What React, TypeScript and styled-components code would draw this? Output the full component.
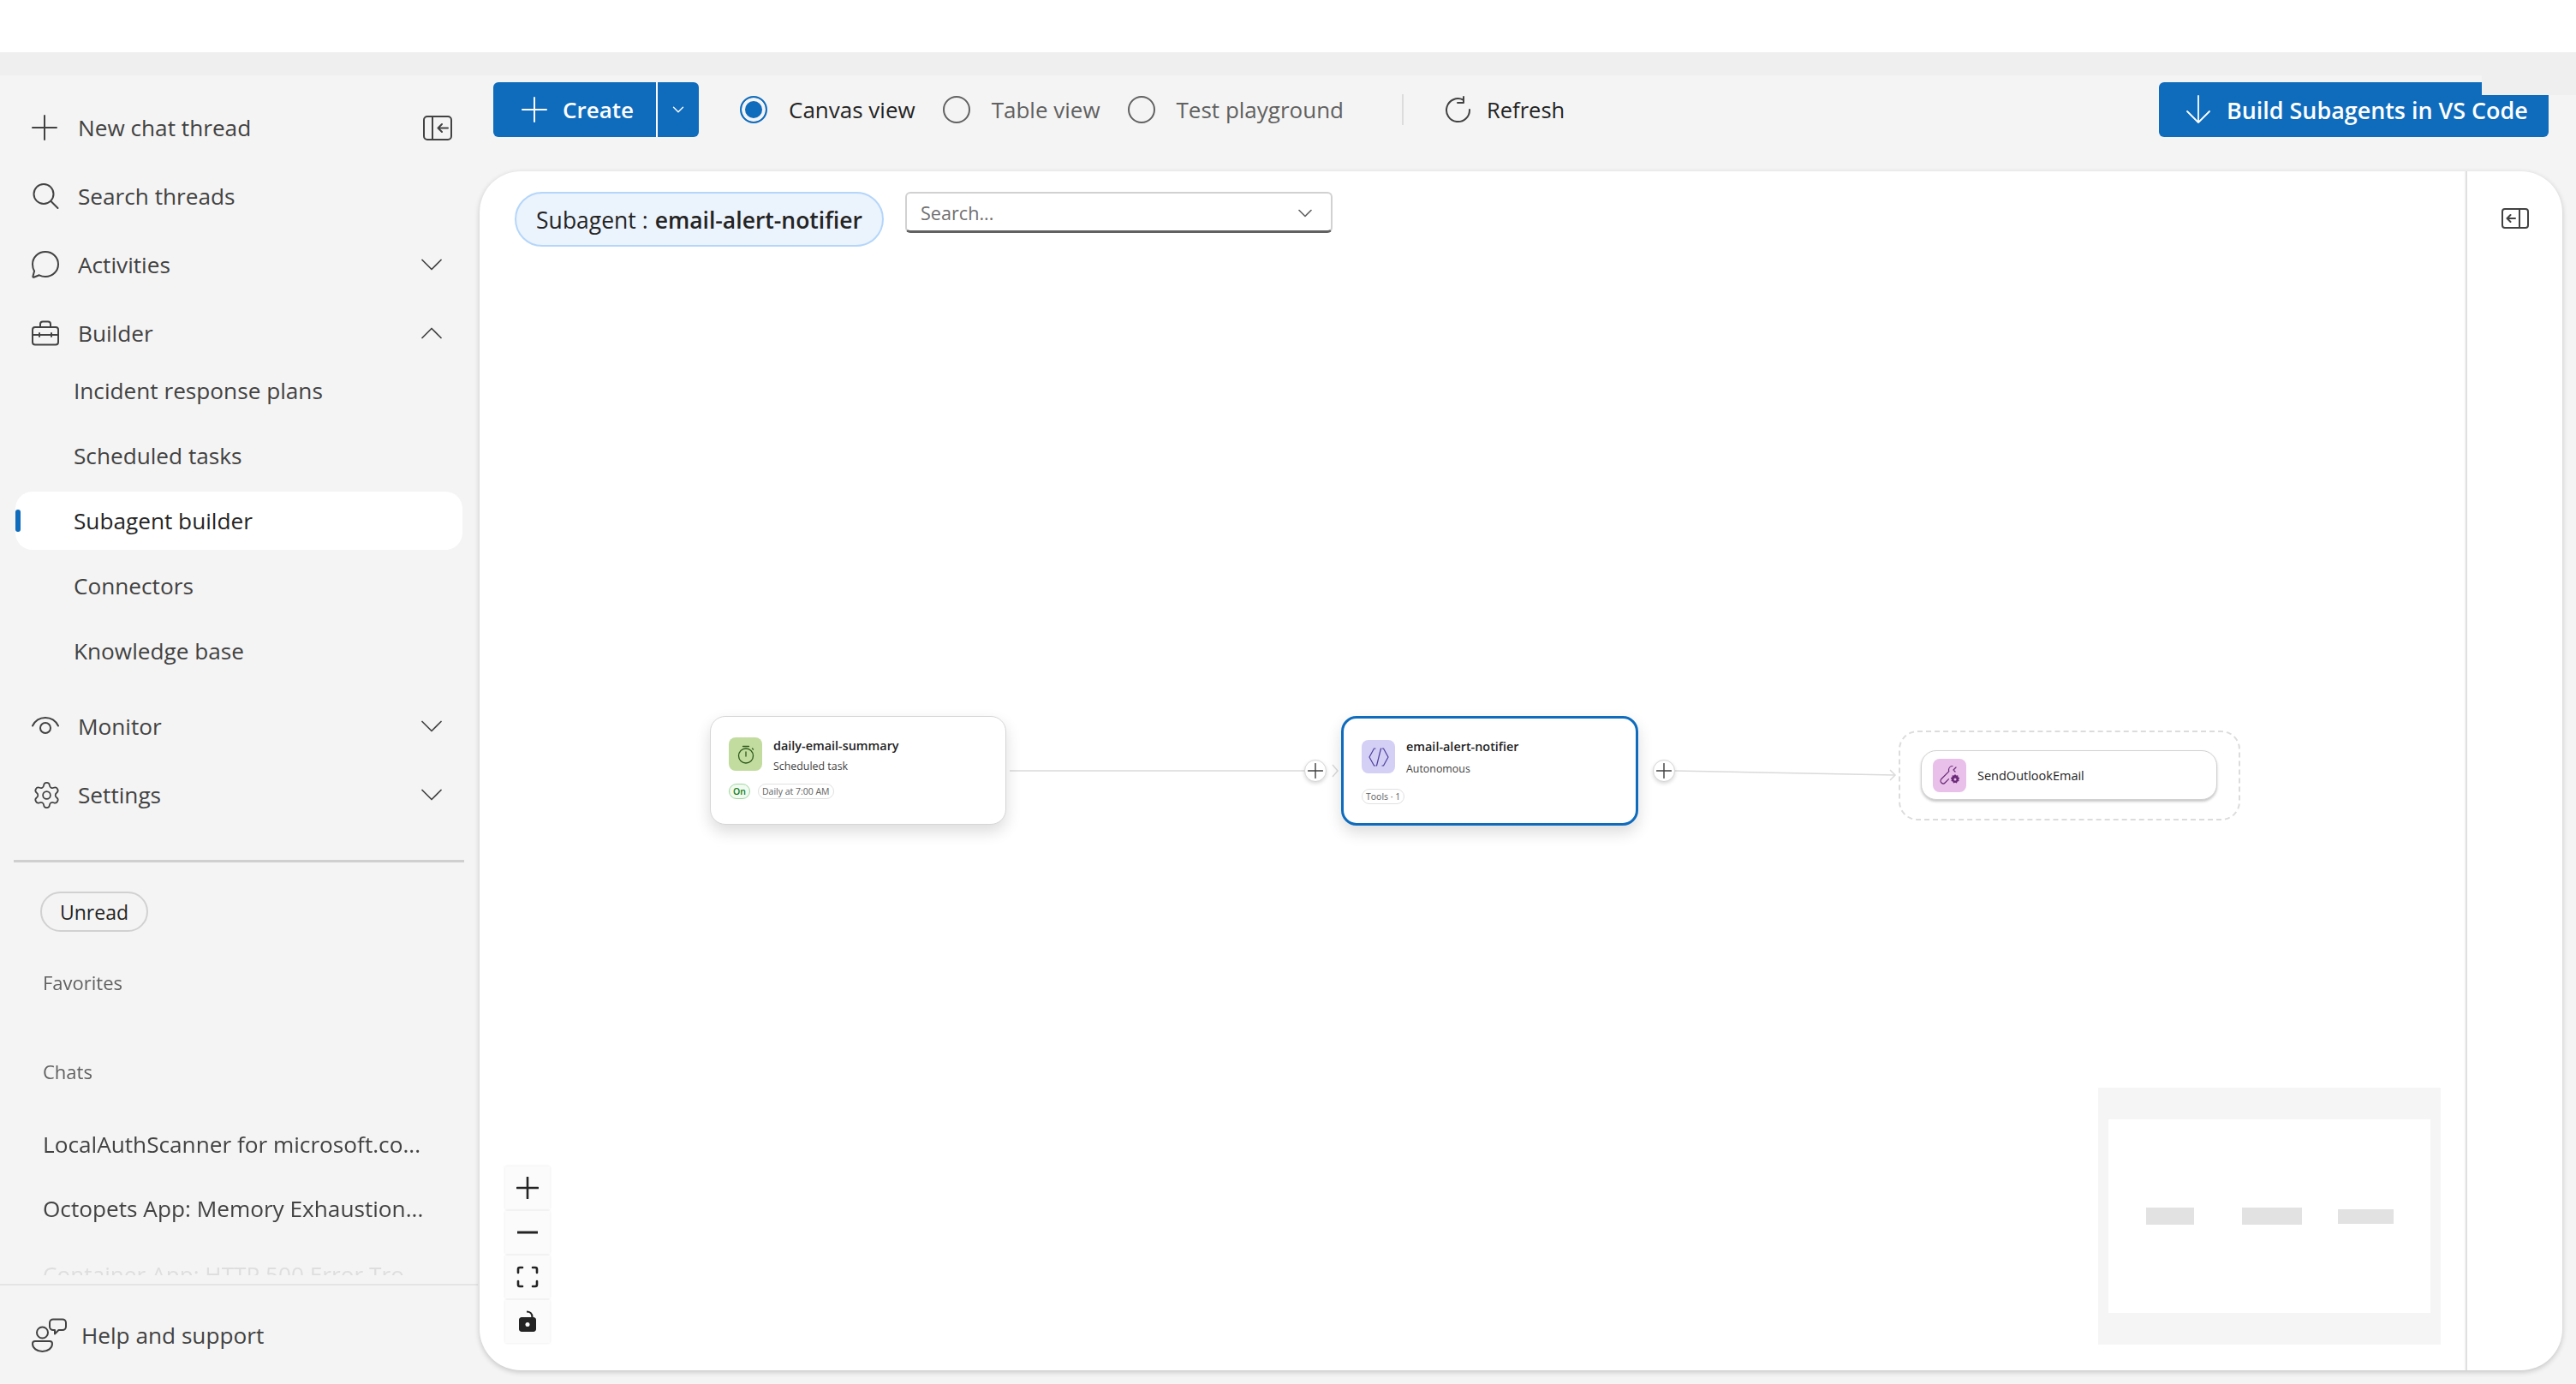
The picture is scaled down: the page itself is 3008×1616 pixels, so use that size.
import React from 'react';
import { styled, createGlobalStyle } from 'styled-components';
import { ChevronDown, Settings } from 'lucide-react';

const GlobalStyle = createGlobalStyle`
  html, body {
    margin: 0;
    padding: 0;
    background: #fff;
    font-family: "Open Sans", "Noto Sans", sans-serif;
    color: #424242;
  }
  * { box-sizing: border-box; }
`;

const Page = styled.div`
  position: relative;
  width: 3008px;
  height: 1616px;
  overflow: hidden;
  background: #fff;
`;

const TopStrip = styled.div`
  height: 61px;
  background: #fff;
`;

const Band = styled.div`
  height: 27px;
  background: #efefef;
`;

const BandPatch = styled.div`
  position: absolute;
  top: 88px;
  right: 0;
  width: 110px;
  height: 23px;
  background: #efefef;
  z-index: 2;
`;

const Shell = styled.div`
  display: grid;
  grid-template-columns: 560px 1fr;
  height: 1528px;
  background: #f4f4f4;
`;

/* sidebar */
const Sidebar = styled.aside`
  display: flex;
  flex-direction: column;
  height: 1528px;
`;

const NavGroup = styled.nav<{ $top: number }>`
  display: flex;
  flex-direction: column;
  gap: 16px;
  margin-top: ${(p) => p.$top}px;
`;

const NavRow = styled.div`
  display: flex;
  align-items: center;
  height: 64px;
  padding: 0 32px 0 37px;
  font-size: 26.2px;
  color: #424242;
`;

const NavIcon = styled.span`
  display: flex;
  align-items: center;
  justify-content: flex-start;
  width: 54px;
  flex: none;
`;

const NavLabel = styled.span`
  flex: 1;
`;

const SubList = styled.div`
  display: flex;
  flex-direction: column;
  gap: 8px;
  margin-top: 1px;
`;

const SubItem = styled.div<{ $active?: boolean }>`
  position: relative;
  display: flex;
  align-items: center;
  width: 522px;
  height: 68px;
  margin-left: 18px;
  padding-left: 68px;
  font-size: 26.2px;
  border-radius: 20px;
  color: ${(p) => (p.$active ? '#242424' : '#424242')};
  background: ${(p) => (p.$active ? '#fff' : 'transparent')};
`;

const ActiveMark = styled.span`
  position: absolute;
  left: 0;
  top: 21px;
  width: 6px;
  height: 26px;
  border-radius: 3px;
  background: #0f6cbd;
`;

const Divider = styled.hr`
  width: 526px;
  height: 3px;
  margin: 44px 0 0 16px;
  border: 0;
  background: #cfcfcf;
`;

const UnreadPill = styled.div`
  display: flex;
  align-items: center;
  justify-content: center;
  width: 126px;
  height: 47px;
  margin: 34px 0 0 47px;
  border: 2px solid #d1d1d1;
  border-radius: 24px;
  font-size: 23px;
  color: #242424;
`;

const History = styled.div`
  flex: 1;
  min-height: 0;
  overflow: hidden;
  margin-bottom: 10px;
  padding-left: 50px;
  -webkit-mask-image: linear-gradient(#000 calc(100% - 34px), rgba(0, 0, 0, 0.12) calc(100% - 14px));
`;

const SectionLabel = styled.div<{ $top: number }>`
  margin-top: ${(p) => p.$top}px;
  height: 30px;
  line-height: 30px;
  font-size: 22px;
  color: #616161;
`;

const ChatItem = styled.div<{ $top: number }>`
  margin-top: ${(p) => p.$top}px;
  height: 38px;
  line-height: 38px;
  font-size: 26.2px;
  color: #424242;
  white-space: nowrap;
`;

const HelpRow = styled.div`
  display: flex;
  align-items: center;
  height: 117px;
  margin-right: 2px;
  padding: 0 0 0 37px;
  border-top: 2px solid #e4e4e4;
  font-size: 26.2px;
  color: #424242;
`;

const HelpIcon = styled.span`
  display: flex;
  width: 58px;
  flex: none;
`;

const NavChevron = styled.svg`
  margin-right: 12px;
  color: #424242;
`;

/* toolbar */
const Main = styled.main`
  display: flex;
  flex-direction: column;
  min-width: 0;
`;

const Toolbar = styled.div`
  display: flex;
  align-items: center;
  height: 112px;
  padding: 8px 32px 40px 16px;
`;

const SplitButton = styled.div`
  display: flex;
  width: 240px;
  height: 64px;
  border-radius: 6px;
  background: #0f6cbd;
  color: #fff;
  font-size: 26px;
  font-weight: 600;
`;

const SplitMain = styled.div`
  display: flex;
  align-items: center;
  gap: 18px;
  width: 192px;
  padding-left: 33px;
  border-right: 2px solid #fff;
`;

const SplitCaret = styled.div`
  display: flex;
  flex: 1;
  align-items: center;
  justify-content: center;
`;

const RadioGroup = styled.div`
  display: flex;
  align-items: center;
  gap: 32px;
  margin-left: 48px;
`;

const RadioItem = styled.label<{ $checked?: boolean }>`
  display: flex;
  align-items: center;
  gap: 25px;
  font-size: 26px;
  color: ${(p) => (p.$checked ? '#242424' : '#616161')};
`;

const RadioMark = styled.span<{ $checked?: boolean }>`
  display: block;
  width: 32px;
  height: 32px;
  border-radius: 50%;
  border: 2px solid ${(p) => (p.$checked ? '#0f6cbd' : '#616161')};
  background: ${(p) => (p.$checked ? '#0f6cbd' : 'transparent')};
  box-shadow: ${(p) => (p.$checked ? 'inset 0 0 0 4px #f4f4f4' : 'none')};
`;

const ToolSep = styled.span`
  width: 2px;
  height: 36px;
  margin-left: 68px;
  background: #dcdcdc;
`;

const RefreshButton = styled.div`
  display: flex;
  align-items: center;
  gap: 17px;
  margin-left: 48px;
  font-size: 25.5px;
  font-weight: 500;
  color: #242424;
`;

const BuildButton = styled.div`
  display: flex;
  align-items: center;
  gap: 18px;
  width: 455px;
  height: 64px;
  margin-left: auto;
  padding-left: 31px;
  border-radius: 6px;
  background: #0f6cbd;
  color: #fff;
  font-size: 26.9px;
  font-weight: 600;
  white-space: nowrap;
`;

/* canvas panel */
const Panel = styled.section`
  display: flex;
  flex: 1;
  margin: 0 16px 16px 0;
  border-radius: 48px;
  background: #fff;
  box-shadow: 0 2px 6px rgba(0, 0, 0, 0.2);
  overflow: hidden;
`;

const Canvas = styled.div`
  position: relative;
  flex: 1;
`;

const Filters = styled.div`
  display: flex;
  align-items: flex-start;
  gap: 25px;
  padding: 24px 0 0 41px;
`;

const SubagentChip = styled.div`
  display: flex;
  align-items: center;
  justify-content: center;
  gap: 8px;
  width: 431px;
  height: 64px;
  padding-top: 2px;
  border: 2px solid #b4d6fa;
  border-radius: 32px;
  background: #ebf3fc;
  font-size: 26.5px;
  color: #242424;
  white-space: nowrap;
  b { font-weight: 600; }
`;

const SearchBox = styled.div`
  display: flex;
  align-items: center;
  justify-content: space-between;
  width: 499px;
  height: 48px;
  padding: 2px 16px 0 16px;
  border: 2px solid #d1d1d1;
  border-bottom: 3px solid #616161;
  border-radius: 6px;
  font-size: 21.6px;
  color: #707070;
`;

const Rail = styled.div`
  display: flex;
  justify-content: center;
  width: 113px;
  padding-top: 43px;
  border-left: 2px solid #e0e0e0;
  box-shadow: -1px 0 2px rgba(0, 0, 0, 0.05);
`;

const Edges = styled.svg`
  position: absolute;
  inset: 0;
`;

const Node = styled.div<{ $x: number; $y: number; $w: number; $h: number; $selected?: boolean }>`
  position: absolute;
  left: ${(p) => p.$x}px;
  top: ${(p) => p.$y}px;
  width: ${(p) => p.$w}px;
  height: ${(p) => p.$h}px;
  padding: ${(p) => (p.$selected ? '25px 0 0 21px' : '24px 0 0 21px')};
  border: ${(p) => (p.$selected ? '3px solid #0f6cbd' : '1px solid #d6d6d6')};
  border-radius: 18px;
  background: #fff;
  box-shadow: 0 8px 18px rgba(0, 0, 0, 0.14);
`;

const NodeHead = styled.div`
  display: flex;
  gap: 13px;
`;

const NodeIcon = styled.div<{ $bg: string }>`
  display: flex;
  align-items: center;
  justify-content: center;
  width: 39px;
  height: 39px;
  flex: none;
  border-radius: 8px;
  background: ${(p) => p.$bg};
`;

const NodeText = styled.div<{ $lift?: number }>`
  margin-top: ${(p) => -(p.$lift ?? 0)}px;
`;

const NodeTitle = styled.div`
  font-size: 14.4px;
  line-height: 20px;
  font-weight: 600;
  color: #242424;
  white-space: nowrap;
`;

const NodeSub = styled.div<{ $gap: number }>`
  margin-top: ${(p) => p.$gap}px;
  font-size: 12.4px;
  line-height: 18px;
  color: #424242;
`;

const Pills = styled.div<{ $top: number }>`
  display: flex;
  gap: 9px;
  margin-top: ${(p) => p.$top}px;
`;

const Pill = styled.span<{ $on?: boolean }>`
  display: inline-flex;
  align-items: center;
  height: 18px;
  padding: 0 4px;
  border: 1px solid ${(p) => (p.$on ? '#9fd89f' : '#e0e0e0')};
  border-radius: 9px;
  background: ${(p) => (p.$on ? '#f1faf1' : '#fff')};
  font-size: 10.5px;
  font-weight: ${(p) => (p.$on ? 600 : 400)};
  color: ${(p) => (p.$on ? '#107c10' : '#616161')};
  white-space: nowrap;
`;

const AddHandle = styled.div<{ $x: number }>`
  position: absolute;
  left: ${(p) => p.$x}px;
  top: 687px;
  display: flex;
  align-items: center;
  justify-content: center;
  width: 26px;
  height: 26px;
  border-radius: 50%;
  border: 1px solid #d6d6d6;
  background: #fff;
  box-shadow: 0 2px 4px rgba(0, 0, 0, 0.15);
`;

const ToolGroup = styled.div`
  position: absolute;
  left: 1657px;
  top: 653px;
  width: 399px;
  height: 105px;
  border: 2px dashed #dcdcdc;
  border-radius: 22px;
  padding: 21px 0 0 24px;
`;

const ToolCard = styled.div`
  display: flex;
  align-items: center;
  gap: 13px;
  width: 346px;
  height: 58px;
  padding-left: 13px;
  border: 1px solid #d1d1d1;
  border-radius: 18px;
  background: #fff;
  box-shadow: 0 2px 3px rgba(0, 0, 0, 0.22);
  font-size: 14.5px;
  font-weight: 500;
  color: #242424;
`;

const ZoomBar = styled.div`
  position: absolute;
  left: 30px;
  top: 1162px;
  display: flex;
  flex-direction: column;
  gap: 2px;
  width: 52px;
`;

const ZoomButton = styled.div`
  display: flex;
  align-items: center;
  justify-content: center;
  height: 50px;
  background: #fbfbfb;
  box-shadow: 0 0 3px rgba(0, 0, 0, 0.1);
`;

const MiniMap = styled.div`
  position: absolute;
  left: 1890px;
  top: 1070px;
  width: 400px;
  height: 300px;
  padding: 37px 12px;
  background: #f5f5f5;
`;

const MiniBoard = styled.div`
  display: flex;
  align-items: center;
  width: 376px;
  height: 226px;
  padding-left: 44px;
  background: #fff;
`;

const MiniNode = styled.span<{ $w: number; $h: number; $gap: number }>`
  width: ${(p) => p.$w}px;
  height: ${(p) => p.$h}px;
  margin-right: ${(p) => p.$gap}px;
  background: #e2e2e2;
`;

const Line = ({ d, w = 1.6 }: { d: string; w?: number }) => (
  <path d={d} fill="none" stroke="currentColor" strokeWidth={w} strokeLinecap="round" strokeLinejoin="round" />
);

const Chevron = ({ up }: { up?: boolean }) => (
  <NavChevron width="24" height="14" viewBox="0 0 24 14">
    <Line d={up ? 'M1 12.5L12 1.500l11 11' : 'M1 1.500l11 11 11-11'} w={1.700} />
  </NavChevron>
);

const PlusIcon = ({ size = 30, w = 2, color = '#424242' }: { size?: number; w?: number; color?: string }) => (
  <svg width={size} height={size} viewBox="0 0 30 30" style={{ color }}>
    <Line d="M15 1v28M1 15h28" w={w} />
  </svg>
);

const SearchIcon = () => (
  <svg width="32" height="32" viewBox="0 0 32 32" style={{ color: '#424242' }}>
    <circle cx="14" cy="13.5" r="11.5" fill="none" stroke="currentColor" strokeWidth="2" />
    <Line d="M22.5 22l8 8" w={2} />
  </svg>
);

const ChatIcon = () => (
  <svg width="32" height="34" viewBox="0 0 32 34" style={{ color: '#424242' }}>
    <Line d="M16 2c8.4 0 15 6.4 15 14.5S24.4 31 16 31c-2.600 0-5-.6-7.200-1.700L2.500 31.800c-.7.2-1.300-.4-1.100-1.100l1.700-6.100C1.700 22.400 1 19.600 1 16.500 1 8.400 7.600 2 16 2z" w={2} />
  </svg>
);

const BriefcaseIcon = () => (
  <svg width="32" height="30" viewBox="0 0 32 30" style={{ color: '#424242' }}>
    <rect x="1" y="8" width="30" height="20.500" rx="3" fill="none" stroke="currentColor" strokeWidth="2" />
    <Line d="M10 8V4.500C10 2.800 11.200 1.500 13 1.500h6c1.800 0 3 1.300 3 3V8M1 17h30M9 15v4M23 15v4" w={2} />
  </svg>
);

const EyeIcon = () => (
  <svg width="32" height="22" viewBox="0 0 32 22" style={{ color: '#424242' }}>
    <Line d="M1 10.500C4 4.500 9.500 1 16 1s12 3.500 15 9.500" w={2} />
    <circle cx="16" cy="13" r="6" fill="none" stroke="currentColor" strokeWidth="2" />
  </svg>
);

const PanelLeftIcon = () => (
  <svg width="34" height="29" viewBox="0 0 34 29" style={{ color: '#424242' }}>
    <rect x="1" y="1" width="32" height="27" rx="4" fill="none" stroke="currentColor" strokeWidth="2" />
    <Line d="M11 1v27M29 14.500H18M22 10l-4.500 4.500L22 19" w={2} />
  </svg>
);

const PanelRightIcon = () => (
  <svg width="32" height="24" viewBox="0 0 32 24" style={{ color: '#424242' }}>
    <rect x="1" y="1" width="30" height="22" rx="3" fill="none" stroke="currentColor" strokeWidth="2" />
    <Line d="M21 1v22M16 12H7M10.500 8L6.500 12l4 4" w={2} />
  </svg>
);

const HelpGlyph = () => (
  <svg width="42" height="40" viewBox="0 0 42 40" style={{ color: '#424242' }}>
    <circle cx="12.500" cy="17" r="6.500" fill="none" stroke="currentColor" strokeWidth="2" />
    <Line d="M4 27h17c1.700 0 3 1.300 3 3 0 5-5 9-11.500 9S1 35 1 30c0-1.700 1.300-3 3-3z" w={2} />
    <Line d="M25 1.500h11c2 0 4 1.500 4 4v4.500c0 2.500-2 4-4 4h-4.500L27 18.500V14h-2c-2 0-4-1.500-4-4V5.500c0-2.500 2-4 4-4z" w={2} />
  </svg>
);

const ArrowDownIcon = () => (
  <svg width="30" height="34" viewBox="0 0 30 34" style={{ color: '#fff' }}>
    <Line d="M15 1v31M2 19l13 13 13-13" w={1.8} />
  </svg>
);

const RefreshIcon = () => (
  <svg width="32" height="32" viewBox="0 0 32 32" style={{ color: '#424242' }}>
    <Line d="M21.500 4.500A13.500 13.500 0 1 0 29 16M22 1v7h-7" w={2} />
  </svg>
);

const TimerIcon = () => (
  <svg width="20" height="22" viewBox="0 0 20 22" style={{ color: '#2f5a1c' }}>
    <circle cx="10" cy="12.500" r="8.500" fill="none" stroke="currentColor" strokeWidth="1.300" />
    <Line d="M6.500 1.500h7M10 8v5M17.500 4l1 1" w={1.300} />
  </svg>
);

const CodeIcon = () => (
  <svg width="24" height="22" viewBox="0 0 24 22" style={{ color: '#4a3f9c' }}>
    <Line d="M8 1H6.500L1 11l5.500 10H8M16 1h1.500L23 11l-5.500 10H16M14.500 1L9.500 21" w={1.200} />
  </svg>
);

const ToolIcon = () => (
  <svg width="24" height="24" viewBox="0 0 24 24" style={{ color: '#6b2a78' }}>
    <Line d="M19 3l-3 3 2 2M15 1.500c-2.500 0-4.500 2-4.500 4.500 0 .6.100 1.200.3 1.700L2 16.500c-1.300 1.300-1.300 3.300 0 4.500s3 1.200 4.200 0l4.300-4.300" w={1.200} />
    <path d="M18 11l1.200 1.600 2-.3.3 2 1.700 1.200-1.200 1.700.7 1.900-2 .5-.8 1.900-1.900-.8-1.900.8-.8-1.900-2-.5.700-1.900-1.200-1.700 1.700-1.200.3-2 2 .3z" fill="currentColor" />
    <circle cx="18" cy="17" r="1.500" fill="#e8c0ea" />
  </svg>
);

const MinusIcon = () => (
  <svg width="26" height="26" viewBox="0 0 26 26" style={{ color: '#242424' }}>
    <path d="M1 13h24" stroke="currentColor" strokeWidth="3" />
  </svg>
);

const FitIcon = () => (
  <svg width="26" height="26" viewBox="0 0 26 26" style={{ color: '#242424' }}>
    <Line d="M2 8V4c0-1.200.8-2 2-2h3M19 2h3c1.200 0 2 .8 2 2v4M24 18v4c0 1.200-.8 2-2 2h-3M7 24H4c-1.200 0-2-.8-2-2v-4" w={2.600} />
  </svg>
);

const LockIcon = () => (
  <svg width="20" height="26" viewBox="0 0 20 26" style={{ color: '#242424' }}>
    <path d="M3 8h14c1.600 0 3 1.400 3 3v11c0 1.600-1.400 3-3 3H3c-1.600 0-3-1.400-3-3V11c0-1.600 1.400-3 3-3z" fill="currentColor" />
    <circle cx="10" cy="16.500" r="2.500" fill="#fcfcfc" />
    <path d="M9 1.500c3.500 0 6.500 2 6.500 6.500" fill="none" stroke="currentColor" strokeWidth="2.200" />
  </svg>
);

const App = () => {
  return (
    <Page>
      <GlobalStyle />
      <TopStrip />
      <Band />
      <BandPatch />
      <Shell>
        <Sidebar>
          <NavGroup $top={29}>
            <NavRow>
              <NavIcon><PlusIcon /></NavIcon>
              <NavLabel>New chat thread</NavLabel>
              <PanelLeftIcon />
            </NavRow>
            <NavRow>
              <NavIcon><SearchIcon /></NavIcon>
              <NavLabel>Search threads</NavLabel>
            </NavRow>
            <NavRow>
              <NavIcon><ChatIcon /></NavIcon>
              <NavLabel>Activities</NavLabel>
              <Chevron />
            </NavRow>
            <NavRow>
              <NavIcon><BriefcaseIcon /></NavIcon>
              <NavLabel>Builder</NavLabel>
              <Chevron up />
            </NavRow>
          </NavGroup>
          <SubList>
            <SubItem>Incident response plans</SubItem>
            <SubItem>Scheduled tasks</SubItem>
            <SubItem $active><ActiveMark />Subagent builder</SubItem>
            <SubItem>Connectors</SubItem>
            <SubItem>Knowledge base</SubItem>
          </SubList>
          <NavGroup $top={22}>
            <NavRow>
              <NavIcon><EyeIcon /></NavIcon>
              <NavLabel>Monitor</NavLabel>
              <Chevron />
            </NavRow>
            <NavRow>
              <NavIcon><Settings size={35} strokeWidth={1.2} color="#424242" /></NavIcon>
              <NavLabel>Settings</NavLabel>
              <Chevron />
            </NavRow>
          </NavGroup>
          <Divider />
          <UnreadPill>Unread</UnreadPill>
          <History>
            <SectionLabel $top={44}>Favorites</SectionLabel>
            <SectionLabel $top={74}>Chats</SectionLabel>
            <ChatItem $top={51}>LocalAuthScanner for microsoft.co...</ChatItem>
            <ChatItem $top={37}>Octopets App: Memory Exhaustion...</ChatItem>
            <ChatItem $top={39}>Container App: HTTP 500 Error Tro...</ChatItem>
          </History>
          <HelpRow>
            <HelpIcon><HelpGlyph /></HelpIcon>
            Help and support
          </HelpRow>
        </Sidebar>
        <Main>
          <Toolbar>
            <SplitButton>
              <SplitMain>
                <PlusIcon color="#fff" />
                Create
              </SplitMain>
              <SplitCaret><ChevronDown size={22} strokeWidth={1.5} color="#fff" /></SplitCaret>
            </SplitButton>
            <RadioGroup>
              <RadioItem $checked><RadioMark $checked />Canvas view</RadioItem>
              <RadioItem><RadioMark />Table view</RadioItem>
              <RadioItem><RadioMark />Test playground</RadioItem>
            </RadioGroup>
            <ToolSep />
            <RefreshButton><RefreshIcon />Refresh</RefreshButton>
            <BuildButton><ArrowDownIcon />Build Subagents in VS Code</BuildButton>
          </Toolbar>
          <Panel>
            <Canvas>
              <Filters>
                <SubagentChip>Subagent : <b>email-alert-notifier</b></SubagentChip>
                <SearchBox>
                  Search...
                  <ChevronDown size={28} strokeWidth={1.4} color="#616161" />
                </SearchBox>
              </Filters>
              <Edges width="2319" height="1400" viewBox="0 0 2319 1400">
                <g fill="none" stroke="#dadada" strokeWidth="1.500">
                  <path d="M619 700H964" />
                  <path d="M996 693l6 7-6 7" />
                  <path d="M1396 700L1652 705" />
                  <path d="M1647 699l6 6-6 6" />
                </g>
              </Edges>
              <Node $x={269} $y={636} $w={346} $h={127}>
                <NodeHead>
                  <NodeIcon $bg="#c1dc9e"><TimerIcon /></NodeIcon>
                  <NodeText>
                    <NodeTitle>daily-email-summary</NodeTitle>
                    <NodeSub $gap={5}>Scheduled task</NodeSub>
                  </NodeText>
                </NodeHead>
                <Pills $top={11}>
                  <Pill $on>On</Pill>
                  <Pill>Daily at 7:00 AM</Pill>
                </Pills>
              </Node>
              <AddHandle $x={963}><PlusIcon size={18} w={2.400} /></AddHandle>
              <Node $x={1006} $y={636} $w={347} $h={128} $selected>
                <NodeHead>
                  <NodeIcon $bg="#d4cff5"><CodeIcon /></NodeIcon>
                  <NodeText $lift={2}>
                    <NodeTitle>email-alert-notifier</NodeTitle>
                    <NodeSub $gap={7}>Autonomous</NodeSub>
                  </NodeText>
                </NodeHead>
                <Pills $top={14}>
                  <Pill>Tools · 1</Pill>
                </Pills>
              </Node>
              <AddHandle $x={1370}><PlusIcon size={18} w={2.400} /></AddHandle>
              <ToolGroup>
                <ToolCard>
                  <NodeIcon $bg="#e8c0ea"><ToolIcon /></NodeIcon>
                  SendOutlookEmail
                </ToolCard>
              </ToolGroup>
              <ZoomBar>
                <ZoomButton><PlusIcon size={26} w={3} color="#242424" /></ZoomButton>
                <ZoomButton><MinusIcon /></ZoomButton>
                <ZoomButton><FitIcon /></ZoomButton>
                <ZoomButton><LockIcon /></ZoomButton>
              </ZoomBar>
              <MiniMap>
                <MiniBoard>
                  <MiniNode $w={56} $h={20} $gap={56} />
                  <MiniNode $w={70} $h={20} $gap={42} />
                  <MiniNode $w={65} $h={17} $gap={0} />
                </MiniBoard>
              </MiniMap>
            </Canvas>
            <Rail><PanelRightIcon /></Rail>
          </Panel>
        </Main>
      </Shell>
    </Page>
  );
};

export default App;
